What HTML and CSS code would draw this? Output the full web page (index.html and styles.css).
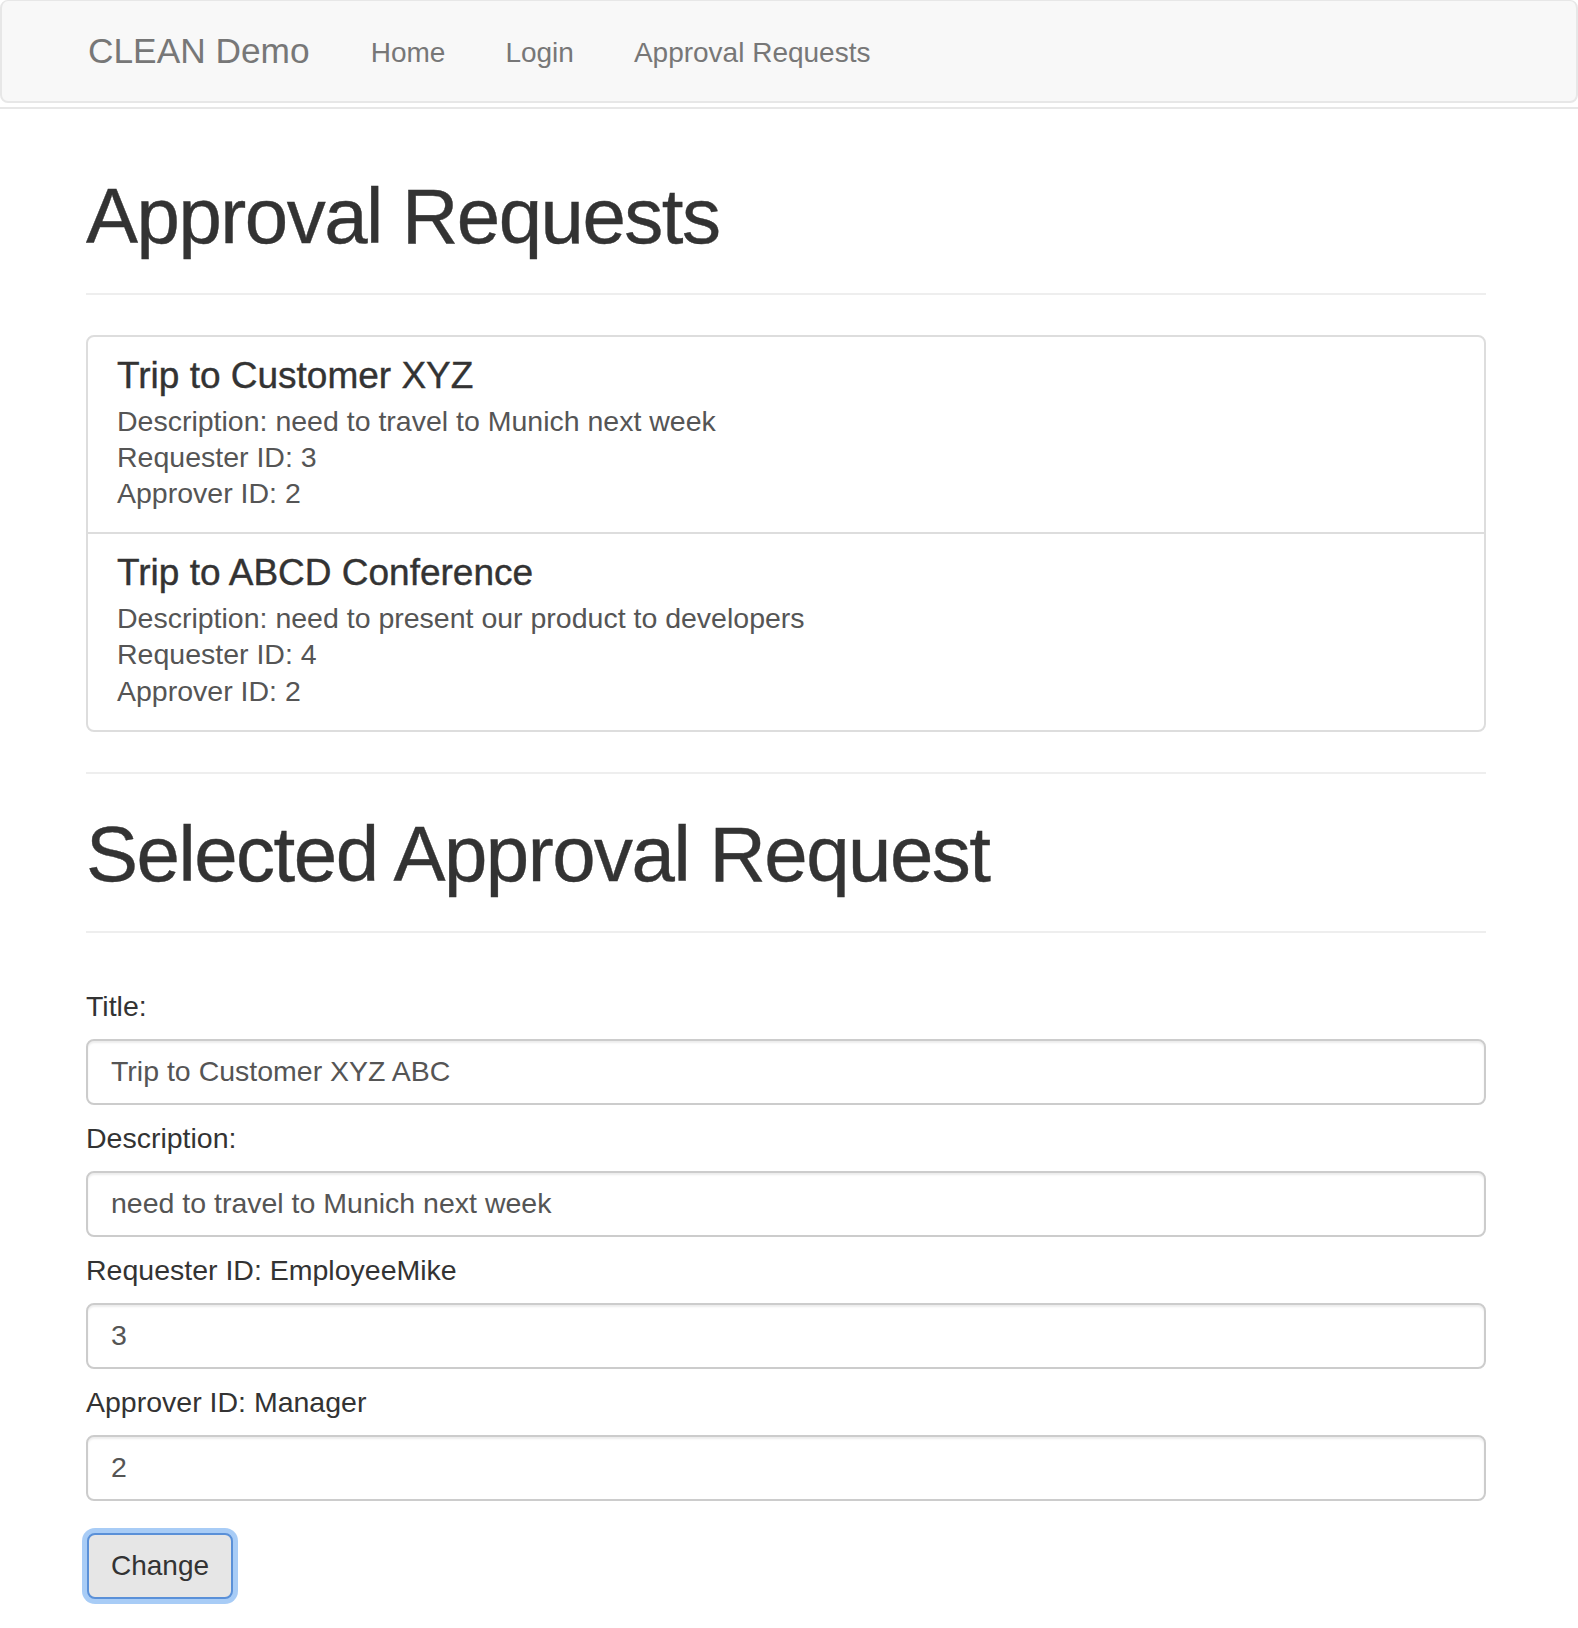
FILE: index.html
```html
<!DOCTYPE html>
<html lang="en">
<head>
<meta charset="utf-8">
<title>CLEAN Demo</title>
<link rel="stylesheet" href="styles.css">
</head>
<body>
<nav class="navbar">
  <a class="brand" href="#">CLEAN Demo</a>
  <ul class="nav">
    <li><a href="#">Home</a></li>
    <li><a href="#">Login</a></li>
    <li><a href="#">Approval Requests</a></li>
  </ul>
</nav>
<div class="rule"></div>
<main class="container">
  <div class="page-header first">
    <h1>Approval Requests</h1>
  </div>
  <div class="list-group">
    <a class="list-group-item" href="#">
      <h4>Trip to Customer XYZ</h4>
      <p>Description: need to travel to Munich next week<br>Requester ID: 3<br>Approver ID: 2</p>
    </a>
    <a class="list-group-item" href="#">
      <h4>Trip to ABCD Conference</h4>
      <p>Description: need to present our product to developers<br>Requester ID: 4<br>Approver ID: 2</p>
    </a>
  </div>
  <hr class="divider">
  <div class="page-header second">
    <h1>Selected Approval Request</h1>
  </div>
  <form class="form">
    <div class="form-group">
      <label for="title">Title:</label>
      <input id="title" class="form-control" type="text" value="Trip to Customer XYZ ABC">
    </div>
    <div class="form-group">
      <label for="desc">Description:</label>
      <input id="desc" class="form-control" type="text" value="need to travel to Munich next week">
    </div>
    <div class="form-group">
      <label for="req">Requester ID: EmployeeMike</label>
      <input id="req" class="form-control" type="text" value="3">
    </div>
    <div class="form-group">
      <label for="appr">Approver ID: Manager</label>
      <input id="appr" class="form-control" type="text" value="2">
    </div>
    <button class="btn" type="button">Change</button>
  </form>
</main>
</body>
</html>
```

FILE: styles.css
```css
* { box-sizing: border-box; }

html, body {
  margin: 0;
  padding: 0;
  background: #fff;
}

body {
  font-family: "Liberation Sans", Arial, Helvetica, sans-serif;
  font-size: 28.5px;
  line-height: 36.3px;
  color: #333;
}

a { text-decoration: none; }

/* Navbar */
.navbar {
  display: flex;
  align-items: flex-start;
  height: 103px;
  background: #f8f8f8;
  border: 2px solid #e7e7e7;
  border-top-width: 1px;
  border-radius: 8px;
}

.brand {
  margin-left: 86px;
  padding: 30px 31px 30px 0;
  font-size: 35.3px;
  line-height: 40px;
  color: #777;
}

.nav {
  display: flex;
  list-style: none;
  margin: 0;
  padding: 0;
}

.nav a {
  display: block;
  padding: 32px 30px 28px;
  font-size: 28px;
  line-height: 40px;
  color: #777;
}

.rule {
  height: 2px;
  margin-top: 4px;
  background: #e7e7e7;
}

/* Container */
.container {
  width: 1400px;
  margin-left: 86px;
  padding-bottom: 20px;
}

.page-header {
  padding-bottom: 33px;
  border-bottom: 2px solid #eee;
}

.page-header.first { margin-top: 65px; margin-bottom: 40px; }
.page-header.second { margin-top: 38px; margin-bottom: 55px; }

.page-header h1 {
  margin: 0;
  font-size: 78px;
  line-height: 85.8px;
  font-weight: normal;
  letter-spacing: -1.5px;
  color: #333;
  -webkit-text-stroke: 0.4px #333;
}

/* List group */
.list-group {
  border: 2px solid #ddd;
  border-radius: 8px;
  background: #fff;
}

.list-group-item {
  display: block;
  padding: 19px 30px 21px 29px;
  color: #555;
}

.list-group-item + .list-group-item {
  border-top: 2px solid #ddd;
}

.list-group-item h4 {
  margin: 0 0 6px;
  font-size: 37px;
  line-height: 40.7px;
  font-weight: normal;
  color: #333;
  -webkit-text-stroke: 0.4px #333;
}

.list-group-item p {
  margin: 0;
  color: #555;
}

.divider {
  margin: 40px 0 0;
  border: 0;
  border-top: 2px solid #eee;
  height: 0;
}

/* Form */
.form-group {
  margin-bottom: 15px;
}

.form-group label {
  display: block;
  margin-bottom: 15px;
  line-height: 36px;
  color: #333;
}

.form-control {
  display: block;
  width: 100%;
  height: 66px;
  padding: 0 23px;
  font-family: inherit;
  font-size: 28.5px;
  color: #555;
  background: #fff;
  border: 2px solid #ccc;
  border-radius: 8px;
  box-shadow: inset 0 2px 2px rgba(0, 0, 0, 0.075);
  outline: none;
}

.btn {
  display: block;
  margin-top: 32px;
  margin-left: 1px;
  height: 66px;
  padding: 0 22px;
  font-family: inherit;
  font-size: 28px;
  color: #333;
  background: #e6e6e6;
  border: 2px solid #5a90d8;
  border-radius: 8px;
  box-shadow: 0 0 0 5px rgba(110, 170, 240, 0.6);
  cursor: pointer;
}
```
